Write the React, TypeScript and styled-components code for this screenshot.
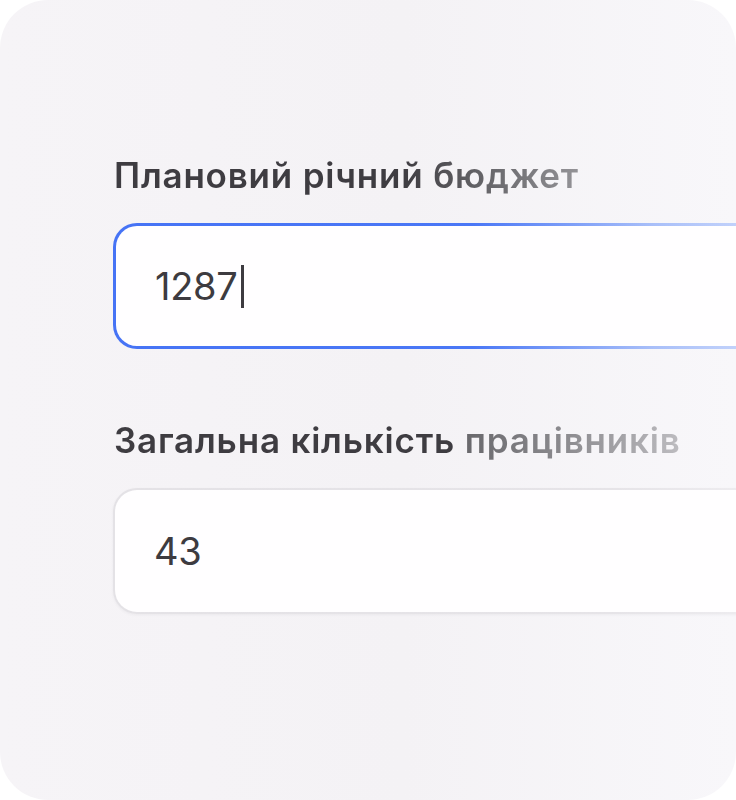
import styled, { createGlobalStyle } from "styled-components";

const Global = createGlobalStyle`
  html, body {
    margin: 0;
    padding: 0;
    background: #ffffff;
  }
  body {
    font-family: Inter, "Noto Sans", sans-serif;
  }
`;

const Card = styled.div`
  width: 736px;
  height: 800px;
  box-sizing: border-box;
  border-radius: 48px;
  overflow: hidden;
  padding: 155px 0 0 113px;

  background: linear-gradient(90deg, #f6f4f7 0%, #f4f2f5 55%, #f8f7fa 100%);

  display: flex;
  flex-direction: column;
`;

const Field = styled.div`
  display: flex;
  flex-direction: column;
  gap: 28px;

  & + & {
    margin-top: 71px;
  }
`;

const Label = styled.label<{ $fade: string }>`
  align-self: flex-start;
  padding-left: 1px;
  font-size: 35px;
  line-height: 40px;
  font-weight: 600;
  letter-spacing: 0.8px;
  white-space: nowrap;

  background: ${(p) => p.$fade};
  -webkit-background-clip: text;
  background-clip: text;
  color: transparent;
`;

const InputBox = styled.div<{ $active?: boolean }>`
  width: 720px;
  height: 126px;
  box-sizing: border-box;
  border-radius: 24px;
  padding-left: 39px;

  display: flex;
  align-items: center;

  ${(p) =>
    p.$active
      ? `
    border: 3px solid transparent;
    background:
      linear-gradient(#fffeff, #fffeff) padding-box,
      linear-gradient(90deg, #4673f5 0%, #4a77f6 50%, #a9bff9 75%, #dde6fd 100%) border-box;
  `
      : `
    border: 2px solid transparent;
    background:
      linear-gradient(#fffeff, #fffeff) padding-box,
      linear-gradient(90deg, #e4e2e6 0%, #e6e4e8 70%, #f3f2f5 100%) border-box;
    box-shadow: 0 1px 3px rgba(40, 30, 50, 0.05);
  `}
`;

const Value = styled.span`
  font-size: 38px;
  font-weight: 400;
  color: #3d3b40;
  letter-spacing: -0.3px;
  display: flex;
  align-items: center;
`;

const Caret = styled.span`
  display: inline-block;
  width: 3px;
  height: 43px;
  margin-left: 4px;
  background: #3d3b40;
`;

export default function App() {
  return (
    <>
      <Global />
      <Card>
        <Field>
          <Label $fade="linear-gradient(90deg, #3e3c41 0%, #3e3c41 62%, #59585c 74%, #949397 100%)">
            Плановий річний бюджет
          </Label>
          <InputBox $active>
            <Value>
              1287
              <Caret />
            </Value>
          </InputBox>
        </Field>
        <Field>
          <Label $fade="linear-gradient(90deg, #3e3c41 0%, #3e3c41 60%, #69686c 62%, #8d8c90 80%, #bdbcc0 100%)">
            Загальна кількість працівників
          </Label>
          <InputBox>
            <Value>43</Value>
          </InputBox>
        </Field>
      </Card>
    </>
  );
}
